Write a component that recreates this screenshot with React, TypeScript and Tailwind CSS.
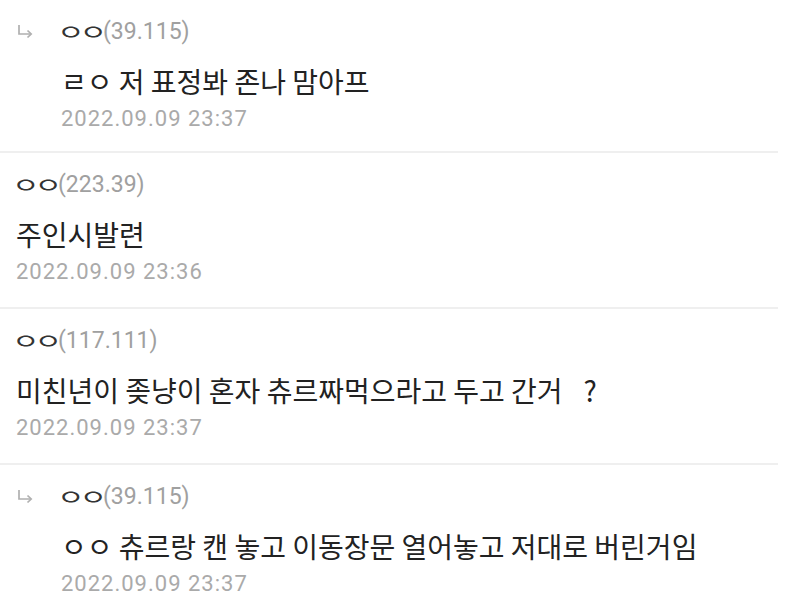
import React from "react";

type C = { reply?: boolean; ip: string; text: React.ReactNode; date: string };

const comments: C[] = [
  { reply: true, ip: "(39.115)", text: "ㄹㅇ 저 표정봐 존나 맘아프", date: "2022.09.09 23:37" },
  { ip: "(223.39)", text: "주인시발련", date: "2022.09.09 23:36" },
  {
    ip: "(117.111)",
    text: (
      <>
        미친년이 좆냥이 혼자 츄르짜먹으라고 두고 간거<span className="inline-block w-[21px]" />?
      </>
    ),
    date: "2022.09.09 23:37",
  },
  { reply: true, ip: "(39.115)", text: "ㅇㅇ 츄르랑 캔 놓고 이동장문 열어놓고 저대로 버린거임", date: "2022.09.09 23:37" },
];

function ReplyArrow() {
  return (
    <svg width="17" height="15" viewBox="0 0 17 15" className="absolute left-[17px] top-[24px]">
      <path d="M2 1 V10 H14" fill="none" stroke="#b0b0b0" strokeWidth="1.7" />
      <path d="M10.5 6.5 L14.2 10 L10.5 13.5" fill="none" stroke="#b0b0b0" strokeWidth="1.7" />
    </svg>
  );
}

export default function App() {
  return (
    <div className="w-[809px] h-[608px] overflow-hidden bg-white">
      {comments.map((c, i) => (
        <div key={i}>
          <div className={`relative pt-[16px] ${i === 0 ? "pb-[17px]" : "pb-[20px]"} ${c.reply ? "pl-[61px]" : "pl-[16px]"}`}>
            {c.reply && <ReplyArrow />}
            <div className="h-[30px] flex items-center">
              <span className="inline-block w-[42px] -ml-[4px] mr-[4px] text-[30px] tracking-[-5px] leading-none text-[#333] scale-y-[0.72] font-['Noto_Sans_CJK_KR',sans-serif] whitespace-nowrap">
                ㅇㅇ
              </span>
              <span className="text-[23px] text-[#a0a0a0] font-['Roboto',sans-serif] leading-none">{c.ip}</span>
            </div>
            <div className="mt-[17px] h-[36px] flex items-center text-[28px] text-[#222] font-['Noto_Sans_CJK_KR',sans-serif] leading-none whitespace-nowrap">
              {c.text}
            </div>
            <div className="mt-[5px] h-[30px] flex items-center text-[22px] tracking-[1px] text-[#aaaaaa] font-['Roboto',sans-serif] leading-none">
              {c.date}
            </div>
          </div>
          <div className="h-[2px] bg-[#efefef] mr-[31px]" />
        </div>
      ))}
    </div>
  );
}
